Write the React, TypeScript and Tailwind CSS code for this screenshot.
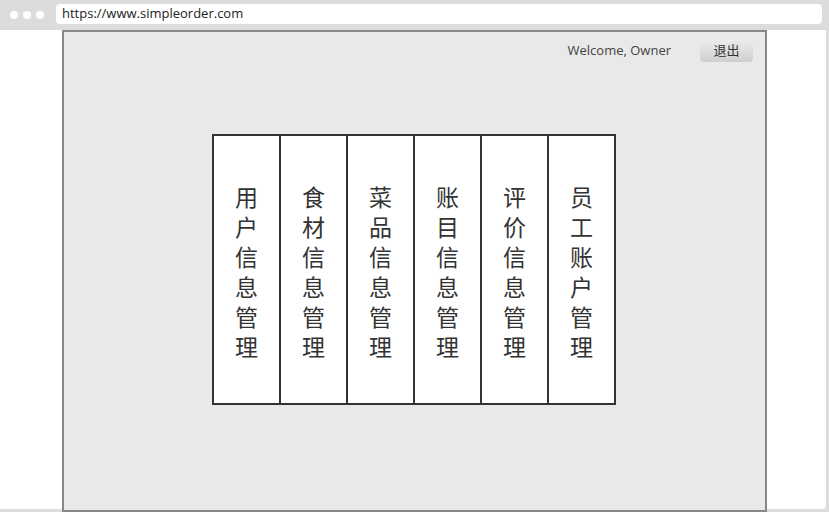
import React from 'react';

const modules = [
  '用户信息管理',
  '食材信息管理',
  '菜品信息管理',
  '账目信息管理',
  '评价信息管理',
  '员工账户管理',
];

const fonts = { fontFamily: '"Open Sans", "Noto Sans CJK SC", sans-serif' };

export default function App() {
  return (
    <div className="w-[829px] h-[512px] bg-[#dcdcdc] overflow-hidden flex flex-col" style={fonts}>
      {/* browser chrome */}
      <div className="h-[30px] flex items-center shrink-0">
        <div className="flex gap-[5px] pl-[10px] w-[56px]">
          <span className="w-2 h-2 rounded-full bg-white" />
          <span className="w-2 h-2 rounded-full bg-white" />
          <span className="w-2 h-2 rounded-full bg-white" />
        </div>
        <div className="w-[766px] h-[20px] bg-white rounded-[4px] flex items-center pl-[6px] text-[13px] text-[#222] -mt-[2px]">
          https://www.simpleorder.com
        </div>
      </div>

      {/* page */}
      <div className="w-[826px] h-[479px] bg-white rounded-br-[4px] pl-[62px] flex">
        <div className="w-[705px] h-[482px] bg-[#e9e9e9] border-2 border-[#888] flex flex-col">
          <div className="flex items-center justify-end h-[34px] pr-[12px] pt-[4px]">
            <span className="text-[13px] text-[#444] mr-[29px]">Welcome, Owner</span>
            <button className="w-[53px] h-[22px] rounded-[4px] bg-gradient-to-b from-[#ececec] to-[#cfcfcf] text-[13px] text-[#333]">
              退出
            </button>
          </div>
          <div className="flex pl-[148px] pt-[68px]">
            <div className="flex border-r-2 border-[#333]">
              {modules.map((m) => (
                <div
                  key={m}
                  className="w-[67px] h-[271px] border-y-2 border-l-2 border-[#333] bg-white flex items-center justify-center pt-[2px]"
                >
                  <p
                    className="w-[1em] text-[23px] leading-[30px] text-[#333] break-all text-center"
                    style={{ fontFamily: '"Noto Sans CJK SC", sans-serif' }}
                  >
                    {m}
                  </p>
                </div>
              ))}
            </div>
          </div>
        </div>
      </div>
    </div>
  );
}
